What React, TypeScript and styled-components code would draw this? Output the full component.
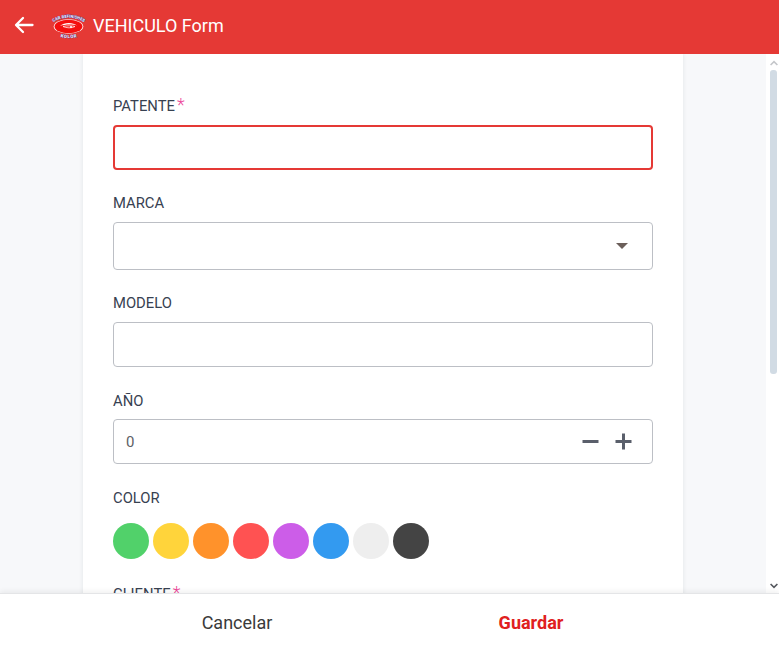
import React from "react";
import styled, { createGlobalStyle } from "styled-components";

const Global = createGlobalStyle`
  html, body { margin: 0; padding: 0; height: 100%; overflow: hidden; }
  body { font-family: Roboto, "Liberation Sans", sans-serif; background: #fff; }
  #root { height: 100%; }
`;

const Page = styled.div`
  height: 651px;
  display: flex;
  flex-direction: column;
`;

const Header = styled.header`
  height: 54px;
  flex: none;
  background: #e53935;
  display: flex;
  align-items: center;
  padding-left: 12px;
  color: #fff;
`;

const BackIcon = styled.svg`
  width: 24px;
  height: 24px;
  flex: none;
  margin-bottom: 4px;
`;

const LogoIcon = styled.svg`
  width: 38px;
  height: 28px;
  margin-left: 14px;
  flex: none;
`;

const Title = styled.h1`
  margin: 0 0 2px 5px;
  font-size: 18px;
  font-weight: 400;
  line-height: 24px;
`;

const Middle = styled.div`
  flex: 1;
  min-height: 0;
  display: flex;
`;

const Scroller = styled.main`
  flex: 1;
  min-width: 0;
  overflow: hidden;
  background: #f7f8fa;
  display: flex;
  justify-content: center;
`;

const Card = styled.form`
  width: 540px;
  flex: none;
  align-self: flex-start;
  min-height: 700px;
  background: #fff;
  padding: 42px 30px 30px;
  box-shadow: 0 0 4px rgba(40, 50, 70, 0.1);
`;

const Field = styled.div<{ $gap: number }>`
  margin-bottom: ${(p) => p.$gap}px;
`;

const Label = styled.label<{ $gap: number }>`
  display: block;
  font-size: 14.8px;
  line-height: 20px;
  color: #374151;
  margin-bottom: ${(p) => p.$gap}px;
`;

const Required = styled.span`
  color: #ec4899;
  font-size: 18px;
  font-weight: 300;
  line-height: 14px;
  margin-left: 2px;
`;

const InputBox = styled.div<{ $height: number; $error?: boolean }>`
  height: ${(p) => p.$height}px;
  box-sizing: border-box;
  border: ${(p) => (p.$error ? "2px solid #e53935" : "1px solid #bcbfc5")};
  border-radius: 4px;
  background: #fff;
  display: flex;
  align-items: center;
  justify-content: space-between;
`;

const Caret = styled.span`
  width: 0;
  height: 0;
  margin-right: 24px;
  border-left: 6px solid transparent;
  border-right: 6px solid transparent;
  border-top: 6px solid #6b5f5a;
`;

const NumberValue = styled.span`
  margin-left: 12px;
  font-size: 15px;
  color: #5d6066;
`;

const Stepper = styled.div`
  display: flex;
  align-items: center;
  gap: 16px;
  margin-right: 20px;
`;

const StepIcon = styled.svg`
  width: 17px;
  height: 17px;
  display: block;
`;

const Swatches = styled.div`
  display: flex;
  gap: 4px;
`;

const Swatch = styled.div<{ $color: string }>`
  width: 36px;
  height: 36px;
  border-radius: 50%;
  background: ${(p) => p.$color};
`;

const ScrollTrack = styled.aside`
  width: 13px;
  flex: none;
  box-sizing: border-box;
  padding: 6px 1px 4px 3px;
  background: #fff;
  display: flex;
  flex-direction: column;
  align-items: center;
`;

const ScrollArrow = styled.svg`
  width: 8px;
  height: 6px;
  flex: none;
  display: block;
`;

const ScrollRail = styled.div`
  flex: 1;
  align-self: stretch;
  padding: 4px 1px 0;
`;

const ScrollThumb = styled.div`
  height: 304px;
  border-radius: 3px;
  background: #d1dbe4;
`;

const Footer = styled.footer`
  height: 58px;
  flex: none;
  box-sizing: border-box;
  background: #fff;
  border-top: 1px solid #e4e5e7;
  box-shadow: 0 -2px 5px rgba(0, 0, 0, 0.06);
  position: relative;
  display: flex;
  justify-content: center;
  padding-right: 11px;
`;

const FooterButton = styled.button<{ $primary?: boolean }>`
  width: 294px;
  height: 56px;
  border: 0;
  background: transparent;
  padding: 0;
  font-family: inherit;
  font-size: 18px;
  font-weight: ${(p) => (p.$primary ? 700 : 400)};
  color: ${(p) => (p.$primary ? "#e02020" : "#3a3a3a")};
`;

const colors = ["#51d16a", "#ffd43b", "#ff922b", "#ff5252", "#cc5de8", "#339af0", "#eeeeee", "#444444"];

export default function App() {
  return (
    <Page>
      <Global />
      <Header>
        <BackIcon viewBox="0 0 24 24" fill="none" stroke="#fff" strokeWidth="2.3" strokeLinecap="round" strokeLinejoin="round">
          <path d="M20.5 12H4.2M11 5l-7 7 7 7" />
        </BackIcon>
        <LogoIcon viewBox="0 0 38 28">
          <defs>
            <path id="logoTop" d="M1.5 11.5 C 7 2.5, 30 2.5, 36 11.5" />
            <path id="logoBottom" d="M9 23.5 Q 19 26.5 29 23.5" />
          </defs>
          <ellipse cx="18.5" cy="13.5" rx="14.8" ry="7.2" fill="#fff" />
          <ellipse cx="18.5" cy="13.5" rx="14" ry="6.7" fill="#f40f0f" />
          <path d="M10 13 C 14 9, 23 9, 27 12.5 C 23 11, 15 11, 10 13 Z" fill="#fff" />
          <path d="M13 13.5 C 17 12.6, 22 12.6, 25 13.5 C 22 15.5, 16 15, 13 13.5 Z" fill="none" stroke="#fff" strokeWidth="0.7" />
          <circle cx="21" cy="14" r="1" fill="#fff" />
          <text fontFamily="Roboto, sans-serif" fontSize="4.1" fontWeight="700" fill="#fff" stroke="#3d3a9e" strokeWidth="0.5" paintOrder="stroke">
            <textPath href="#logoTop" startOffset="50%" textAnchor="middle">CAR REFINISHES</textPath>
          </text>
          <text fontFamily="Roboto, sans-serif" fontSize="4.4" fontWeight="700" fill="#fff" stroke="#3d3a9e" strokeWidth="0.5" letterSpacing="0.7" paintOrder="stroke">
            <textPath href="#logoBottom" startOffset="50%" textAnchor="middle">KOLOR</textPath>
          </text>
        </LogoIcon>
        <Title>VEHICULO Form</Title>
      </Header>
      <Middle>
        <Scroller>
          <Card>
            <Field $gap={23}>
              <Label $gap={9}>PATENTE<Required>*</Required></Label>
              <InputBox $height={45} $error />
            </Field>
            <Field $gap={23}>
              <Label $gap={9}>MARCA</Label>
              <InputBox $height={48}><span /><Caret /></InputBox>
            </Field>
            <Field $gap={24}>
              <Label $gap={9}>MODELO</Label>
              <InputBox $height={45} />
            </Field>
            <Field $gap={24}>
              <Label $gap={8}>AÑO</Label>
              <InputBox $height={45}>
                <NumberValue>0</NumberValue>
                <Stepper>
                  <StepIcon viewBox="0 0 17 17" stroke="#5a5f6b" strokeWidth="3">
                    <path d="M0.5 8.5H16.5" />
                  </StepIcon>
                  <StepIcon viewBox="0 0 17 17" stroke="#5a5f6b" strokeWidth="3">
                    <path d="M0.5 8.5H16.5M8.5 0.5V16.5" />
                  </StepIcon>
                </Stepper>
              </InputBox>
            </Field>
            <Field $gap={25}>
              <Label $gap={15}>COLOR</Label>
              <Swatches>
                {colors.map((c) => (
                  <Swatch key={c} $color={c} />
                ))}
              </Swatches>
            </Field>
            <Field $gap={24}>
              <Label $gap={8}>CLIENTE<Required>*</Required></Label>
              <InputBox $height={45} />
            </Field>
          </Card>
        </Scroller>
        <ScrollTrack>
          <ScrollArrow viewBox="0 0 8 6" fill="none" stroke="#c4c6ca" strokeWidth="1.6">
            <path d="M0.6 5L4 1.6 7.4 5" />
          </ScrollArrow>
          <ScrollRail>
            <ScrollThumb />
          </ScrollRail>
          <ScrollArrow viewBox="0 0 8 6" fill="none" stroke="#55585e" strokeWidth="1.6">
            <path d="M0.6 1L4 4.4 7.4 1" />
          </ScrollArrow>
        </ScrollTrack>
      </Middle>
      <Footer>
        <FooterButton type="button">Cancelar</FooterButton>
        <FooterButton type="button" $primary>Guardar</FooterButton>
      </Footer>
    </Page>
  );
}
